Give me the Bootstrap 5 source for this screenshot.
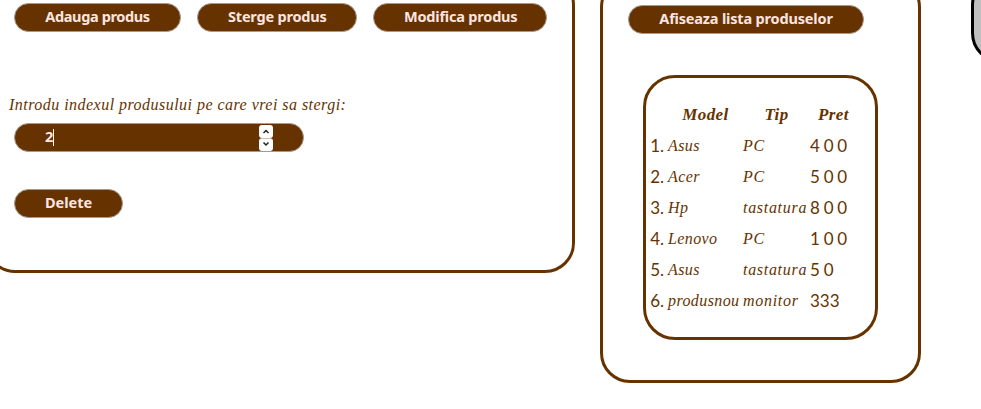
<!DOCTYPE html>
<html lang="ro">
<head>
<meta charset="utf-8">
<meta name="viewport" content="width=device-width, initial-scale=1">
<title>Produse</title>
<link href="https://cdn.jsdelivr.net/npm/bootstrap@5.3.0/dist/css/bootstrap.min.css" rel="stylesheet">
<style>
:root { --brown: #663300; --pink: #ffe4e1; }
body { font-family: "Liberation Serif", serif; font-style: italic; font-size: 16px; color: var(--brown); background: #fff; height: 409px; }
.panel { border: 3px solid var(--brown); border-radius: 30px; }
.panel-actions { width: 590px; height: 298px; margin: -25px 0 0 -15px; padding: 25px 0 0 26px; }
.panel-list { width: 321px; height: 406px; margin: -23px 0 0 25px; padding: 25px 24px 0 25px; }
.panel-side { width: 200px; height: 88px; margin: -25px 0 0 50px; border-color: #000; background: #c0c0c0; }
.pill { height: 29px; padding: 0 30px; border: 1px solid #a99a8c; border-radius: 15px; background: var(--brown); color: var(--pink); font: 700 14.5px/25px "Noto Sans", sans-serif; white-space: nowrap; }
.btn.pill { padding-bottom: 2px; }
.pill:hover { background: var(--brown); color: var(--pink); border-color: #a99a8c; }
.w-add { width: 167px; letter-spacing: -.38px; } .w-remove { width: 160px; letter-spacing: -.2px; } .w-edit { width: 174px; letter-spacing: -.2px; } .w-delete { width: 109px; margin-top: 37px; } .w-show { width: 236px; letter-spacing: -.17px; }
.prompt { margin: 62px 0 0 -5px; line-height: 22px; letter-spacing: .47px; }
.index-box { width: 290px; margin-top: 7px; padding-right: 30px; }
.index-value { line-height: 25px; padding-bottom: 2px; }
.caret { width: 1px; height: 17px; background: #fff; }
.spin { width: 14px; height: 13px; border-radius: 3px; background: #fff; }
.spin + .spin { border-top: 1px solid #c9beb3; }
.spin svg { display: block; width: 14px; height: 12px; }
.product-box { width: 235px; height: 265px; margin: 41px 0 0 15px; padding-top: 21px; border-radius: 32px; }
.products { table-layout: fixed; width: 229px; line-height: 31px; }
.products td, .products th { padding: 0; height: 31px; white-space: nowrap; }
.products th { text-align: center; font-size: 17px; letter-spacing: .4px; }
.c-nr { width: 22px; } .c-model { width: 75px; } .c-tip { width: 67px; }
.products td:first-child, .products td:last-child { font: 400 17px/31px Lato, sans-serif; }
.products td:first-child { text-align: right; padding-right: 4px; }
.products td:nth-child(2) { letter-spacing: .4px; }
.products td:nth-child(3) { letter-spacing: .7px; }
.products td:last-child { letter-spacing: 3.8px; }
.products td:last-child.tight { letter-spacing: 0; }
</style>
</head>
<body class="overflow-hidden">
<main class="d-flex align-items-start">
  <section class="panel panel-actions flex-shrink-0">
    <div class="d-flex gap-3">
      <button class="btn pill w-add">Adauga produs</button>
      <button class="btn pill w-remove">Sterge produs</button>
      <button class="btn pill w-edit">Modifica produs</button>
    </div>
    <div class="prompt">Introdu indexul produsului pe care vrei sa stergi:</div>
    <div class="pill index-box d-flex align-items-center">
      <span class="index-value">2</span><i class="caret"></i>
      <span class="ms-auto d-flex flex-column">
        <span class="spin"><svg viewBox="0 0 14 12"><path d="M4.5 8 7 5.5 9.5 8" fill="none" stroke="#222" stroke-width="1.5"/></svg></span>
        <span class="spin"><svg viewBox="0 0 14 12"><path d="M4.5 3.5 7 6 9.5 3.5" fill="none" stroke="#222" stroke-width="1.5"/></svg></span>
      </span>
    </div>
    <button class="btn pill w-delete d-block">Delete</button>
  </section>
  <section class="panel panel-list flex-shrink-0">
    <button class="btn pill w-show d-block">Afiseaza lista produselor</button>
    <div class="panel product-box">
      <table class="products">
        <colgroup><col class="c-nr"><col class="c-model"><col class="c-tip"><col></colgroup>
        <thead><tr><th></th><th>Model</th><th>Tip</th><th class="text-start ps-2">Pret</th></tr></thead>
        <tbody>
          <tr><td>1.</td><td>Asus</td><td>PC</td><td>400</td></tr>
          <tr><td>2.</td><td>Acer</td><td>PC</td><td>500</td></tr>
          <tr><td>3.</td><td>Hp</td><td>tastatura</td><td>800</td></tr>
          <tr><td>4.</td><td>Lenovo</td><td>PC</td><td>100</td></tr>
          <tr><td>5.</td><td>Asus</td><td>tastatura</td><td>50</td></tr>
          <tr><td>6.</td><td>produsnou</td><td>monitor</td><td class="tight">333</td></tr>
        </tbody>
      </table>
    </div>
  </section>
  <aside class="panel panel-side flex-shrink-0"></aside>
</main>
<script src="https://cdn.jsdelivr.net/npm/bootstrap@5.3.0/dist/js/bootstrap.bundle.min.js"></script>
</body>
</html>
